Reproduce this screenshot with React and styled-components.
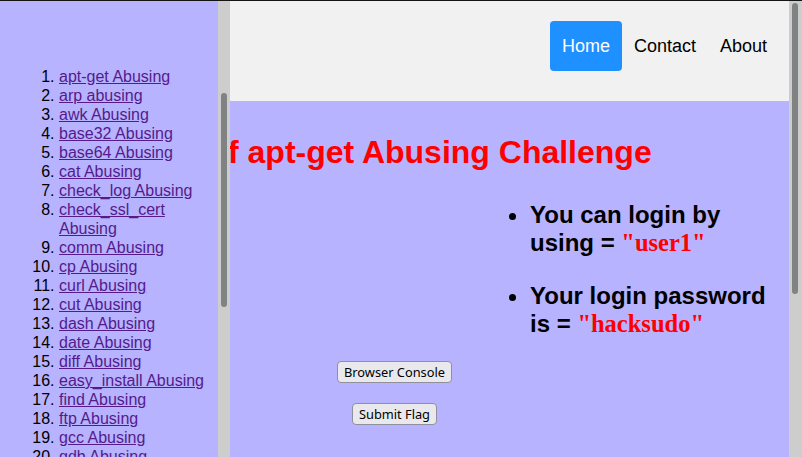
import styled, { createGlobalStyle } from "styled-components";

const LAVENDER = "#b7b3ff";

const GlobalStyle = createGlobalStyle`
  html, body {
    margin: 0;
    padding: 0;
    height: 100%;
    overflow: hidden;
  }
  body {
    font-family: "Liberation Sans", Arial, sans-serif;
  }
  #root {
    height: 100%;
  }
`;

const Frame = styled.div`
  position: relative;
  height: 100%;
  box-sizing: border-box;
  border-top: 1px solid #141414;
`;

const ScrollTrack = styled.div`
  flex: 0 0 ${(p) => p.$width}px;
  box-sizing: border-box;
  padding: ${(p) => p.$offset}px 0 0 3px;
  background: #cdcdcd;
`;

const ScrollThumb = styled.div`
  width: 6px;
  height: ${(p) => p.$length}px;
  border-radius: 3px;
  background: #808383;
`;

const Sidebar = styled.nav`
  position: absolute;
  top: 0;
  left: 0;
  bottom: 0;
  z-index: 1;
  display: flex;
  width: 230px;
  background: ${LAVENDER};
`;

const SideBody = styled.div`
  flex: 1;
  min-width: 0;
  overflow: hidden;
  padding: 66px 0 0 19px;
`;

const SideList = styled.ol`
  margin: 0;
  padding-left: 40px;
  font-size: 16px;
  line-height: 19px;
  color: #000;

  a {
    color: #551a8b;
    text-decoration: underline;
  }
`;

const Page = styled.div`
  display: flex;
  height: 100%;
`;

const Scroller = styled.div`
  flex: 1;
  min-width: 0;
  overflow: hidden;
`;

const Header = styled.header`
  display: flex;
  justify-content: flex-end;
  align-items: flex-start;
  height: 100px;
  box-sizing: border-box;
  padding: 20px 10px;
  background: #f1f1f1;
`;

const NavLink = styled.a`
  padding: 15px 12px 14px;
  font-size: 18px;
  text-decoration: none;
  border-radius: 4px;
  color: ${(p) => (p.$active ? "#fff" : "#000")};
  background: ${(p) => (p.$active ? "dodgerblue" : "transparent")};
`;

const Main = styled.main`
  min-height: 600px;
  box-sizing: border-box;
  padding: 33px 10px 0;
  background: ${LAVENDER};
`;

const Title = styled.h1`
  margin: 0;
  font-size: 32px;
  font-weight: bold;
  text-align: center;
  white-space: nowrap;
  color: red;
`;

const InfoRow = styled.div`
  display: flex;
  justify-content: flex-end;
  margin-top: 30px;
`;

const Facts = styled.ul`
  width: 289px;
  box-sizing: border-box;
  margin: 0;
  padding-left: 40px;
  font-size: 24px;
  font-weight: bold;
  color: #000;

  li + li {
    margin-top: 25px;
  }
`;

const Secret = styled.span`
  font-family: "Liberation Serif", "Times New Roman", serif;
  font-size: 24.5px;
  color: red;
`;

const Actions = styled.div`
  display: flex;
  flex-direction: column;
  align-items: center;
  gap: 20px;
  margin-top: 23px;
`;

const Button = styled.button`
  padding: 2px 6px;
  font-family: "Noto Sans", sans-serif;
  font-size: 12.8px;
  line-height: 16px;
  color: #000;
  background: #e9e9ed;
  border: 1px solid #8f8f9d;
  border-radius: 4px;
`;

const challenges = [
  "apt-get Abusing",
  "arp abusing",
  "awk Abusing",
  "base32 Abusing",
  "base64 Abusing",
  "cat Abusing",
  "check_log Abusing",
  "check_ssl_cert Abusing",
  "comm Abusing",
  "cp Abusing",
  "curl Abusing",
  "cut Abusing",
  "dash Abusing",
  "date Abusing",
  "diff Abusing",
  "easy_install Abusing",
  "find Abusing",
  "ftp Abusing",
  "gcc Abusing",
  "gdb Abusing",
  "git Abusing",
  "grep Abusing",
  "gzip Abusing",
  "head Abusing",
];

export default function App() {
  return (
    <Frame>
      <GlobalStyle />
      <Sidebar>
        <SideBody>
          <SideList>
            {challenges.map((name) => (
              <li key={name}>
                <a href="#">{name}</a>
              </li>
            ))}
          </SideList>
        </SideBody>
        <ScrollTrack $width={12} $offset={92}>
          <ScrollThumb $length={214} />
        </ScrollTrack>
      </Sidebar>
      <Page>
        <Scroller>
          <Header>
            <NavLink href="#" $active>
              Home
            </NavLink>
            <NavLink href="#">Contact</NavLink>
            <NavLink href="#">About</NavLink>
          </Header>
          <Main>
            <Title>Part of apt-get Abusing Challenge</Title>
            <InfoRow>
              <Facts>
                <li>
                  You can login by using = <Secret>"user1"</Secret>
                </li>
                <li>
                  Your login password is = <Secret>"hacksudo"</Secret>
                </li>
              </Facts>
            </InfoRow>
            <Actions>
              <Button>Browser Console</Button>
              <Button>Submit Flag</Button>
            </Actions>
          </Main>
        </Scroller>
        <ScrollTrack $width={13} $offset={2}>
          <ScrollThumb $length={291} />
        </ScrollTrack>
      </Page>
    </Frame>
  );
}
